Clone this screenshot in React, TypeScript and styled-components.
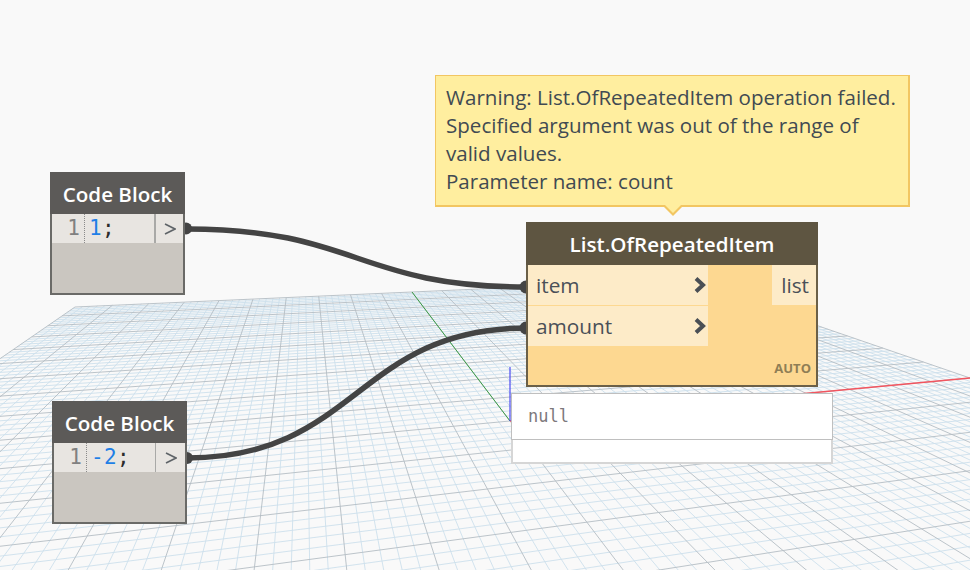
import React from "react";
import styled, { createGlobalStyle } from "styled-components";

const GlobalStyle = createGlobalStyle`
  html, body {
    margin: 0;
    padding: 0;
    background: #f9f9f9;
  }
  body {
    font-family: "Open Sans", "Noto Sans", sans-serif;
  }
`;

const Stage = styled.div`
  position: relative;
  width: 970px;
  height: 570px;
  overflow: hidden;
  background: #f9f9f9;
`;

const Layer = styled.svg`
  position: absolute;
  inset: 0;
  width: 970px;
  height: 570px;
`;

const CodeNode = styled.div<{ $x: number; $y: number }>`
  position: absolute;
  left: ${(p) => p.$x}px;
  top: ${(p) => p.$y}px;
  width: 135px;
  height: 123px;
  box-sizing: border-box;
  display: flex;
  flex-direction: column;
  background: #cac6c0;
  border: 2px solid #6a6a67;
  border-top: 0;
`;

const CodeTitle = styled.div`
  height: 42px;
  box-sizing: border-box;
  padding-top: 2px;
  margin: 0 -2px;
  display: flex;
  align-items: center;
  justify-content: center;
  background: #5c5a58;
  color: #fff;
  font-size: 20.6px;
  font-weight: 600;
`;

const CodeRow = styled.div`
  height: 29px;
  display: flex;
  align-items: stretch;
  background: #e8e5e1;
  font-family: "DejaVu Sans Mono", monospace;
  font-size: 21px;
  line-height: 29px;
`;

const Gutter = styled.div`
  width: 33px;
  box-sizing: border-box;
  padding-right: 4px;
  text-align: right;
  color: #808080;
  border-right: 1px dotted #8a8a8a;
`;

const Code = styled.div`
  flex: 1;
  padding-left: 4px;
  color: #2b2b2b;
  letter-spacing: 0.4px;
`;

const Num = styled.span`
  color: #1f7fe6;
`;

const CodePort = styled.div<{ $thick?: boolean }>`
  width: ${(p) => (p.$thick ? 29 : 30)}px;
  box-sizing: border-box;
  display: flex;
  align-items: center;
  justify-content: center;
  border-left: ${(p) => (p.$thick ? 2 : 1)}px solid #a9a9a7;
  color: #5f6468;
  svg {
    display: block;
  }
`;

const MainNode = styled.div`
  position: absolute;
  left: 526px;
  top: 222px;
  width: 292px;
  height: 165px;
  box-sizing: border-box;
  display: flex;
  flex-direction: column;
  background: #fdd891;
  border: 2px solid #6b6048;
  border-top: 0;
`;

const MainTitle = styled.div`
  height: 43px;
  margin: 0 -2px;
  display: flex;
  align-items: center;
  justify-content: center;
  background: #5e5541;
  color: #fff;
  font-size: 20.6px;
  font-weight: 600;
`;

const Ports = styled.div`
  display: flex;
  justify-content: space-between;
  align-items: flex-start;
`;

const Inputs = styled.div`
  width: 180px;
  display: flex;
  flex-direction: column;
`;

const InputRow = styled.div`
  height: 40px;
  display: flex;
  align-items: center;
  justify-content: space-between;
  padding: 0 1px 0 8px;
  background: #fdebc8;
  color: #4a5058;
  font-size: 20.8px;
  & + & {
    margin-top: 1px;
  }
`;

const OutputRow = styled.div`
  width: 44px;
  height: 40px;
  box-sizing: border-box;
  display: flex;
  align-items: center;
  justify-content: flex-end;
  padding-right: 7px;
  background: #fdebc8;
  color: #4a5058;
  font-size: 20.8px;
`;

const Lacing = styled.div`
  margin-top: auto;
  padding: 0 5px 9px 0;
  text-align: right;
  color: #8f7e55;
  font-size: 13px;
  font-weight: 700;
  line-height: 16px;
`;

const Preview = styled.div`
  position: absolute;
  left: 511px;
  top: 393px;
  width: 322px;
  display: flex;
  flex-direction: column;
  background: #fff;
`;

const PreviewValue = styled.div`
  height: 47px;
  box-sizing: border-box;
  padding-left: 16px;
  border: 1px solid #bfbfbf;
  color: #7d787c;
  font-family: "DejaVu Sans Mono", monospace;
  font-size: 17px;
  line-height: 45px;
`;

const PreviewFooter = styled.div`
  height: 24px;
  box-sizing: border-box;
  border: 2px solid #d6d6d6;
  border-top: 0;
`;

const Warning = styled.div`
  position: absolute;
  left: 435px;
  top: 75px;
  width: 475px;
  height: 132px;
  box-sizing: border-box;
  padding: 7px 10px;
  background: #ffee9f;
  border: 1px solid #f2c662;
  border-width: 1px 2px 2px 1px;
  color: #414a52;
  font-size: 20.55px;
  line-height: 28px;
  white-space: nowrap;
  &::before,
  &::after {
    content: "";
    position: absolute;
    left: 227px;
    width: 0;
    height: 0;
    border-left: 10px solid transparent;
    border-right: 10px solid transparent;
  }
  &::before {
    top: 130px;
    border-top: 10px solid #f2c662;
  }
  &::after {
    top: 127px;
    border-top: 10px solid #ffee9f;
  }
`;

// grid plane: homography through origin, red end, green end and back-left corner
const O = [510, 421];
const R = [970, 378];
const G = [412, 292];
const g = 0.2032;
const h = 0.9047;
const A = [R[0] * (1 + g) - O[0], R[1] * (1 + g) - O[1]];
const B = [G[0] * (1 + h) - O[0], G[1] * (1 + h) - O[1]];

const project = (u: number, v: number) => {
  const w = 1 + u * g + v * h;
  return [(O[0] + u * A[0] + v * B[0]) / w, (O[1] + u * A[1] + v * B[1]) / w];
};

const CELLS = 50;
const VMIN = -0.7;

const seg = (u0: number, v0: number, u1: number, v1: number) => {
  const a = project(u0, v0);
  const b = project(u1, v1);
  return `M${a[0].toFixed(2)} ${a[1].toFixed(2)}L${b[0].toFixed(2)} ${b[1].toFixed(2)}`;
};

const buildGrid = () => {
  let minor = "";
  let major = "";
  for (let i = -CELLS; i <= CELLS; i++) {
    const t = i / CELLS;
    const d = seg(t, VMIN, t, 1);
    if (i % 5 === 0) major += d;
    else minor += d;
  }
  for (let i = Math.round(VMIN * CELLS); i <= CELLS; i++) {
    const t = i / CELLS;
    const d = seg(-1, t, 1, t);
    if (i % 5 === 0) major += d;
    else minor += d;
  }
  return { minor, major };
};

const grid = buildGrid();

const Backdrop = () => (
  <Layer viewBox="0 0 970 570">
    <path d={grid.minor} stroke="#cde0ec" strokeWidth={0.9} fill="none" />
    <path d={grid.major} stroke="#b4bdc4" strokeWidth={0.9} fill="none" />
    <path d={seg(0, 0, 0, 1)} stroke="#3c9c46" strokeWidth={1} fill="none" />
    <path d={seg(0, 0, 1, 0)} stroke="#f2555f" strokeWidth={1.4} fill="none" />
    <path d="M510 421L510 367" stroke="#4a4af0" strokeWidth={1.2} fill="none" />
  </Layer>
);

const Wires = () => (
  <Layer viewBox="0 0 970 570">
    <g stroke="#444" strokeWidth={5.5} fill="none">
      <path d="M187 229C357 229 357 287 527 287" />
      <path d="M187 458C357 458 357 328 527 328" />
    </g>
    <g fill="#444">
      <circle cx={186} cy={228.5} r={6} />
      <circle cx={187} cy={458} r={6} />
      <circle cx={526} cy={287} r={6.5} />
      <circle cx={526} cy={328} r={6.5} />
    </g>
  </Layer>
);

const Angle = () => (
  <svg width="12" height="12" viewBox="0 0 12 12">
    <path d="M1 1L11 6L1 11" fill="none" stroke="currentColor" strokeWidth="1.6" />
  </svg>
);

const Chevron = () => (
  <svg width="14" height="18" viewBox="0 0 14 18">
    <path d="M3 2.5L10 9L3 15.5" fill="none" stroke="#4a4f55" strokeWidth="4" />
  </svg>
);

type CodeBlockProps = { x: number; y: number; thick?: boolean; children: React.ReactNode };

const CodeBlock = ({ x, y, thick, children }: CodeBlockProps) => (
  <CodeNode $x={x} $y={y}>
    <CodeTitle>Code Block</CodeTitle>
    <CodeRow>
      <Gutter>1</Gutter>
      <Code>{children}</Code>
      <CodePort $thick={thick}>
        <Angle />
      </CodePort>
    </CodeRow>
  </CodeNode>
);

export default function App() {
  return (
    <Stage>
      <GlobalStyle />
      <Backdrop />
      <Wires />
      <CodeBlock x={50} y={172} thick>
        <Num>1</Num>;
      </CodeBlock>
      <CodeBlock x={52} y={401}>
        <Num>-2</Num>;
      </CodeBlock>
      <MainNode>
        <MainTitle>List.OfRepeatedItem</MainTitle>
        <Ports>
          <Inputs>
            <InputRow>
              item
              <Chevron />
            </InputRow>
            <InputRow>
              amount
              <Chevron />
            </InputRow>
          </Inputs>
          <OutputRow>list</OutputRow>
        </Ports>
        <Lacing>AUTO</Lacing>
      </MainNode>
      <Preview>
        <PreviewValue>null</PreviewValue>
        <PreviewFooter />
      </Preview>
      <Warning>
        Warning: List.OfRepeatedItem operation failed.
        <br />
        Specified argument was out of the range of
        <br />
        valid values.
        <br />
        Parameter name: count
      </Warning>
    </Stage>
  );
}
